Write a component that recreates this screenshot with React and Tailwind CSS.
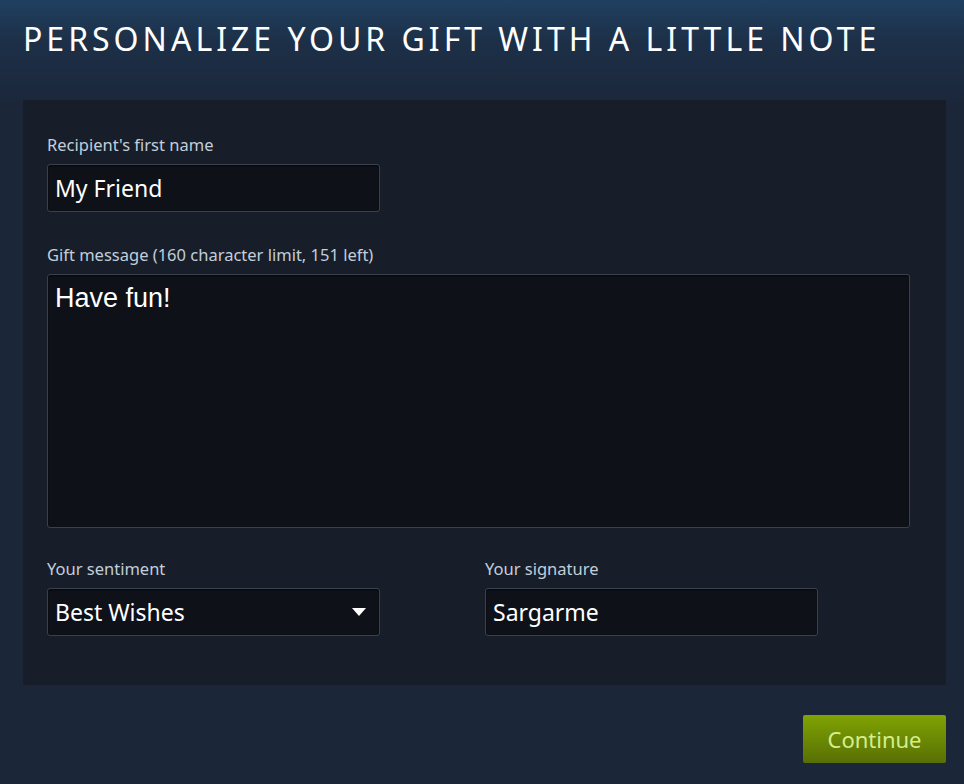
const LABEL = "block text-[16.5px] leading-5 text-[#c2ceda]";
const FIELD =
  "flex h-12 items-center rounded-[3px] border border-[#3a414d] bg-[#0e1118] px-[7px] text-[23px] text-white shadow-[inset_0_1px_2px_rgba(0,0,0,0.6)]";

function Field({ label, value, className = "", children }) {
  return (
    <div className={className}>
      <span className={LABEL}>{label}</span>
      <div className={`mt-[9px] ${FIELD}`}>
        <span className="flex-1">{value}</span>
        {children}
      </div>
    </div>
  );
}

export default function App() {
  return (
    <div
      className="min-h-[784px] w-full bg-[linear-gradient(180deg,#1f4060_0px,#1d3048_40px,#1b2638_110px,#1b2638_100%)] pl-[23px] pr-[18px] pt-[19px]"
      style={{ fontFamily: '"Noto Sans", "Open Sans", sans-serif' }}
    >
      <h1 className="text-[32px] font-normal leading-10 tracking-[4px] text-white">
        PERSONALIZE YOUR GIFT WITH A LITTLE NOTE
      </h1>

      <div className="mt-[41px] bg-[#171e2a] pb-[49px] pl-6 pr-9 pt-[35px]">
        <Field label="Recipient's first name" value="My Friend" className="w-[333px]" />

        <div className="mt-[33px]">
          <span className={LABEL}>Gift message (160 character limit, 151 left)</span>
          <div
            className="mt-[9px] h-[254px] rounded-[3px] border border-[#3a414d] bg-[#0e1118] px-[7px] pt-[7px] text-[27px] leading-8 text-white shadow-[inset_0_1px_2px_rgba(0,0,0,0.6)]"
            style={{ fontFamily: '"Liberation Sans", Arial, sans-serif' }}
          >
            Have fun!
          </div>
        </div>

        <div className="mt-[31px] flex gap-[105px]">
          <Field label="Your sentiment" value="Best Wishes" className="w-[333px]">
            <svg width="14" height="8" viewBox="0 0 14 8" className="mr-[6px]">
              <path d="M0 0h14L7 8z" fill="#fff" />
            </svg>
          </Field>
          <Field label="Your signature" value="Sargarme" className="w-[333px]" />
        </div>
      </div>

      <div className="mt-[30px] flex justify-end">
        <button className="h-12 w-[143px] rounded-[2px] bg-[linear-gradient(180deg,#80a303_0%,#586f05_100%)] text-[22px] text-[#d4ef8c]">
          Continue
        </button>
      </div>
    </div>
  );
}
